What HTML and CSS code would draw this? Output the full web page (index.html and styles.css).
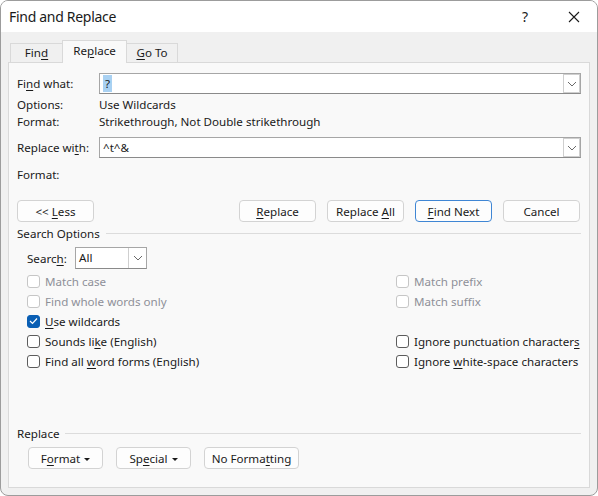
FILE: index.html
```html
<!DOCTYPE html>
<html lang="en">

<head>
    <meta charset="UTF-8">
    <meta name="viewport" content="width=device-width, initial-scale=1.0">
    <title>Find and Replace</title>
    <link rel="stylesheet" href="styles.css">
</head>

<body>
    <div class="window">
        <!-- Title bar -->
        <div class="titlebar">
            <span class="title">Find and Replace</span>
            <span class="help">?</span>
            <span class="close">
                <svg width="12" height="12" viewBox="0 0 12 12">
                    <path d="M1 1 L11 11 M11 1 L1 11" stroke="#1a1a1a" stroke-width="1.1" fill="none" />
                </svg>
            </span>
        </div>

        <div class="client">
            <div class="tabs">
                <div class="tab tab-find">Fin<u>d</u></div>
                <div class="tab active">Re<u>p</u>lace</div>
                <div class="tab tab-goto"><u>G</u>o To</div>
            </div>

            <div class="panel">
                <div class="field-row first">
                    <span class="label">Fi<u>n</u>d what:</span>
                    <div class="combo">
                        <span class="value"><span class="selected">?</span></span>
                        <span class="drop">
                            <svg width="10" height="6" viewBox="0 0 10 6">
                                <path d="M1 1 L5 5 L9 1" stroke="#6a6a6a" stroke-width="1" fill="none" />
                            </svg>
                        </span>
                    </div>
                </div>
                <div class="info-row"><span class="label">Options:</span><span>Use Wildcards</span></div>
                <div class="info-row"><span class="label">Format:</span><span>Strikethrough, Not Double strikethrough</span></div>

                <div class="field-row second">
                    <span class="label">Replace wi<u>t</u>h:</span>
                    <div class="combo">
                        <span class="value">^t^&amp;</span>
                        <span class="drop">
                            <svg width="10" height="6" viewBox="0 0 10 6">
                                <path d="M1 1 L5 5 L9 1" stroke="#6a6a6a" stroke-width="1" fill="none" />
                            </svg>
                        </span>
                    </div>
                </div>
                <div class="info-row format-row"><span class="label">Format:</span></div>

                <div class="button-row">
                    <button class="btn">&lt;&lt; <u>L</u>ess</button>
                    <div class="spacer"></div>
                    <button class="btn"><u>R</u>eplace</button>
                    <button class="btn">Replace <u>A</u>ll</button>
                    <button class="btn default"><u>F</u>ind Next</button>
                    <button class="btn">Cancel</button>
                </div>

                <div class="group-title"><span>Search Options</span></div>

                <div class="search-row">
                    <span class="search-label">Searc<u>h</u>:</span>
                    <div class="select">
                        <span class="value">All</span>
                        <span class="drop">
                            <svg width="10" height="6" viewBox="0 0 10 6">
                                <path d="M1 1 L5 5 L9 1" stroke="#6a6a6a" stroke-width="1" fill="none" />
                            </svg>
                        </span>
                    </div>
                </div>

                <div class="options">
                    <div class="check disabled"><span class="box"></span><span>Match case</span></div>
                    <div class="check disabled"><span class="box"></span><span>Match prefix</span></div>
                    <div class="check disabled"><span class="box"></span><span>Find whole words only</span></div>
                    <div class="check disabled"><span class="box"></span><span>Match suffix</span></div>
                    <div class="check"><span class="box checked">
                            <svg width="9" height="8" viewBox="0 0 9 8">
                                <path d="M1 4 L3.5 6.5 L8 1.5" stroke="#fff" stroke-width="1.2" fill="none" />
                            </svg>
                        </span><span><u>U</u>se wildcards</span></div>
                    <div></div>
                    <div class="check"><span class="box"></span><span>Sounds li<u>k</u>e (English)</span></div>
                    <div class="check"><span class="box"></span><span>Ignore punctuation character<u>s</u></span></div>
                    <div class="check"><span class="box"></span><span>Find all <u>w</u>ord forms (English)</span></div>
                    <div class="check"><span class="box"></span><span>Ignore <u>w</u>hite-space characters</span></div>
                </div>

                <div class="group-title replace-title"><span>Replace</span></div>

                <div class="bottom-row">
                    <button class="btn small">F<u>o</u>rmat <span class="caret"></span></button>
                    <button class="btn small">Sp<u>e</u>cial <span class="caret"></span></button>
                    <button class="btn nofmt">No Forma<u>t</u>ting</button>
                </div>
            </div>
        </div>
    </div>
</body>

</html>
```

FILE: styles.css
```css
body {
    margin: 0;
    background-color: #ffffff;
    font-family: "Noto Sans", "Open Sans", sans-serif;
    font-size: 11.6px;
    color: #1a1a1a;
}

u {
    text-decoration-thickness: 1px;
    text-underline-offset: 2px;
}

/* Dialog frame */
.window {
    width: 596px;
    height: 494px;
    border: 1px solid #9c9c9c;
    border-radius: 8px;
    overflow: hidden;
    background-color: #f0f0f0;
    display: flex;
    flex-direction: column;
}

.titlebar {
    height: 31px;
    background-color: #ffffff;
    display: flex;
    align-items: center;
    padding-left: 8px;
}

.title {
    font-size: 14px;
    letter-spacing: -0.3px;
    flex: 1;
    padding-bottom: 1px;
}

.help {
    font-size: 14px;
    width: 20px;
    margin-right: 26px;
}

.close {
    width: 12px;
    height: 12px;
    margin-right: 17px;
    display: flex;
}

.client {
    flex: 1;
    padding: 8px 7px 7px 7px;
    display: flex;
    flex-direction: column;
}

/* Tabs */
.tabs {
    display: flex;
    height: 22px;
    align-items: flex-end;
    padding-left: 2px;
}

.tab {
    height: 19px;
    line-height: 18px;
    border: 1px solid #d9d9d9;
    border-bottom: none;
    background-color: #f0f0f0;
    box-sizing: border-box;
    text-align: center;
    white-space: nowrap;
}

.tab-find {
    width: 53px;
}

.tab-goto {
    width: 52px;
}

.tab.active {
    height: 23px;
    width: 65px;
    background-color: #f9f9f9;
    position: relative;
    top: 1px;
    margin: 0 -1px;
    z-index: 1;
    line-height: 20px;
}

.panel {
    flex: 1;
    border: 1px solid #d9d9d9;
    background-color: #f9f9f9;
    padding: 0 8px 0 8px;
    display: flex;
    flex-direction: column;
}

/* Find / replace fields */
.field-row {
    display: flex;
    align-items: center;
    height: 21px;
}

.field-row.first {
    margin-top: 10px;
}

.field-row.second {
    margin-top: 7px;
}

.label {
    width: 82px;
    flex-shrink: 0;
}

.combo,
.select {
    display: flex;
    height: 21px;
    box-sizing: border-box;
    border: 1px solid #a6a6a6;
    border-bottom-color: #8a8a8a;
    background-color: #ffffff;
}

.combo {
    flex: 1;
}

.combo .value,
.select .value {
    flex: 1;
    line-height: 19px;
    padding-left: 3px;
}

.selected {
    background-color: #a9d1f2;
    padding: 1px 2px;
}

.drop {
    width: 17px;
    display: flex;
    align-items: center;
    justify-content: center;
    border: 1px solid #cfcfcf;
    box-sizing: border-box;
}

.info-row {
    display: flex;
    height: 17px;
    line-height: 17px;
}

.info-row:nth-child(2) {
    margin-top: 2px;
}

.format-row {
    margin-top: 8px;
}

/* Buttons */
.button-row {
    display: flex;
    margin-top: 17px;
    padding-right: 1px;
    gap: 11px;
}

.spacer {
    flex: 1;
}

.btn {
    font-family: inherit;
    font-size: 11.6px;
    color: #1a1a1a;
    width: 77px;
    height: 22px;
    padding: 0;
    background-color: #fdfdfd;
    border: 1px solid #d3d3d3;
    border-radius: 4px;
    white-space: nowrap;
}

.btn.default {
    border-color: #3f86d4;
}

/* Group titles */
.group-title {
    display: flex;
    align-items: center;
    margin-top: 3px;
    height: 16px;
    gap: 6px;
}

.group-title::after {
    content: '';
    flex: 1;
    height: 1px;
    background-color: #dcdcdc;
}

.replace-title {
    margin-top: 54px;
}

/* Search options */
.search-row {
    display: flex;
    align-items: center;
    margin-top: 6px;
    padding-left: 10px;
}

.search-label {
    width: 48px;
}

.select {
    width: 72px;
    height: 22px;
}

.select .value {
    line-height: 20px;
}

.select .drop {
    border: none;
    border-left: 1px solid #cfcfcf;
    width: 18px;
}

.options {
    display: grid;
    grid-template-columns: 369px 1fr;
    margin-top: 2px;
    padding-left: 10px;
}

.check {
    display: flex;
    align-items: center;
    height: 20px;
    white-space: nowrap;
}

.check.disabled {
    color: #8e9098;
}

.box {
    width: 13px;
    height: 13px;
    flex-shrink: 0;
    box-sizing: border-box;
    border: 1px solid #5c5c5c;
    border-radius: 3px;
    background-color: #ffffff;
    margin-right: 5px;
    display: flex;
    align-items: center;
    justify-content: center;
}

.check.disabled .box {
    border-color: #c6c6c6;
}

.box.checked {
    background-color: #0a5fb4;
    border-color: #0a5fb4;
}

.bottom-row {
    display: flex;
    margin-top: 6px;
    padding-left: 11px;
    gap: 13px;
}

.btn.small {
    width: 75px;
}

.btn.nofmt {
    width: 95px;
}

.caret {
    display: inline-block;
    width: 0;
    height: 0;
    border-left: 3px solid transparent;
    border-right: 3px solid transparent;
    border-top: 3px solid #1a1a1a;
    vertical-align: middle;
    margin-left: 1px;
}
```
